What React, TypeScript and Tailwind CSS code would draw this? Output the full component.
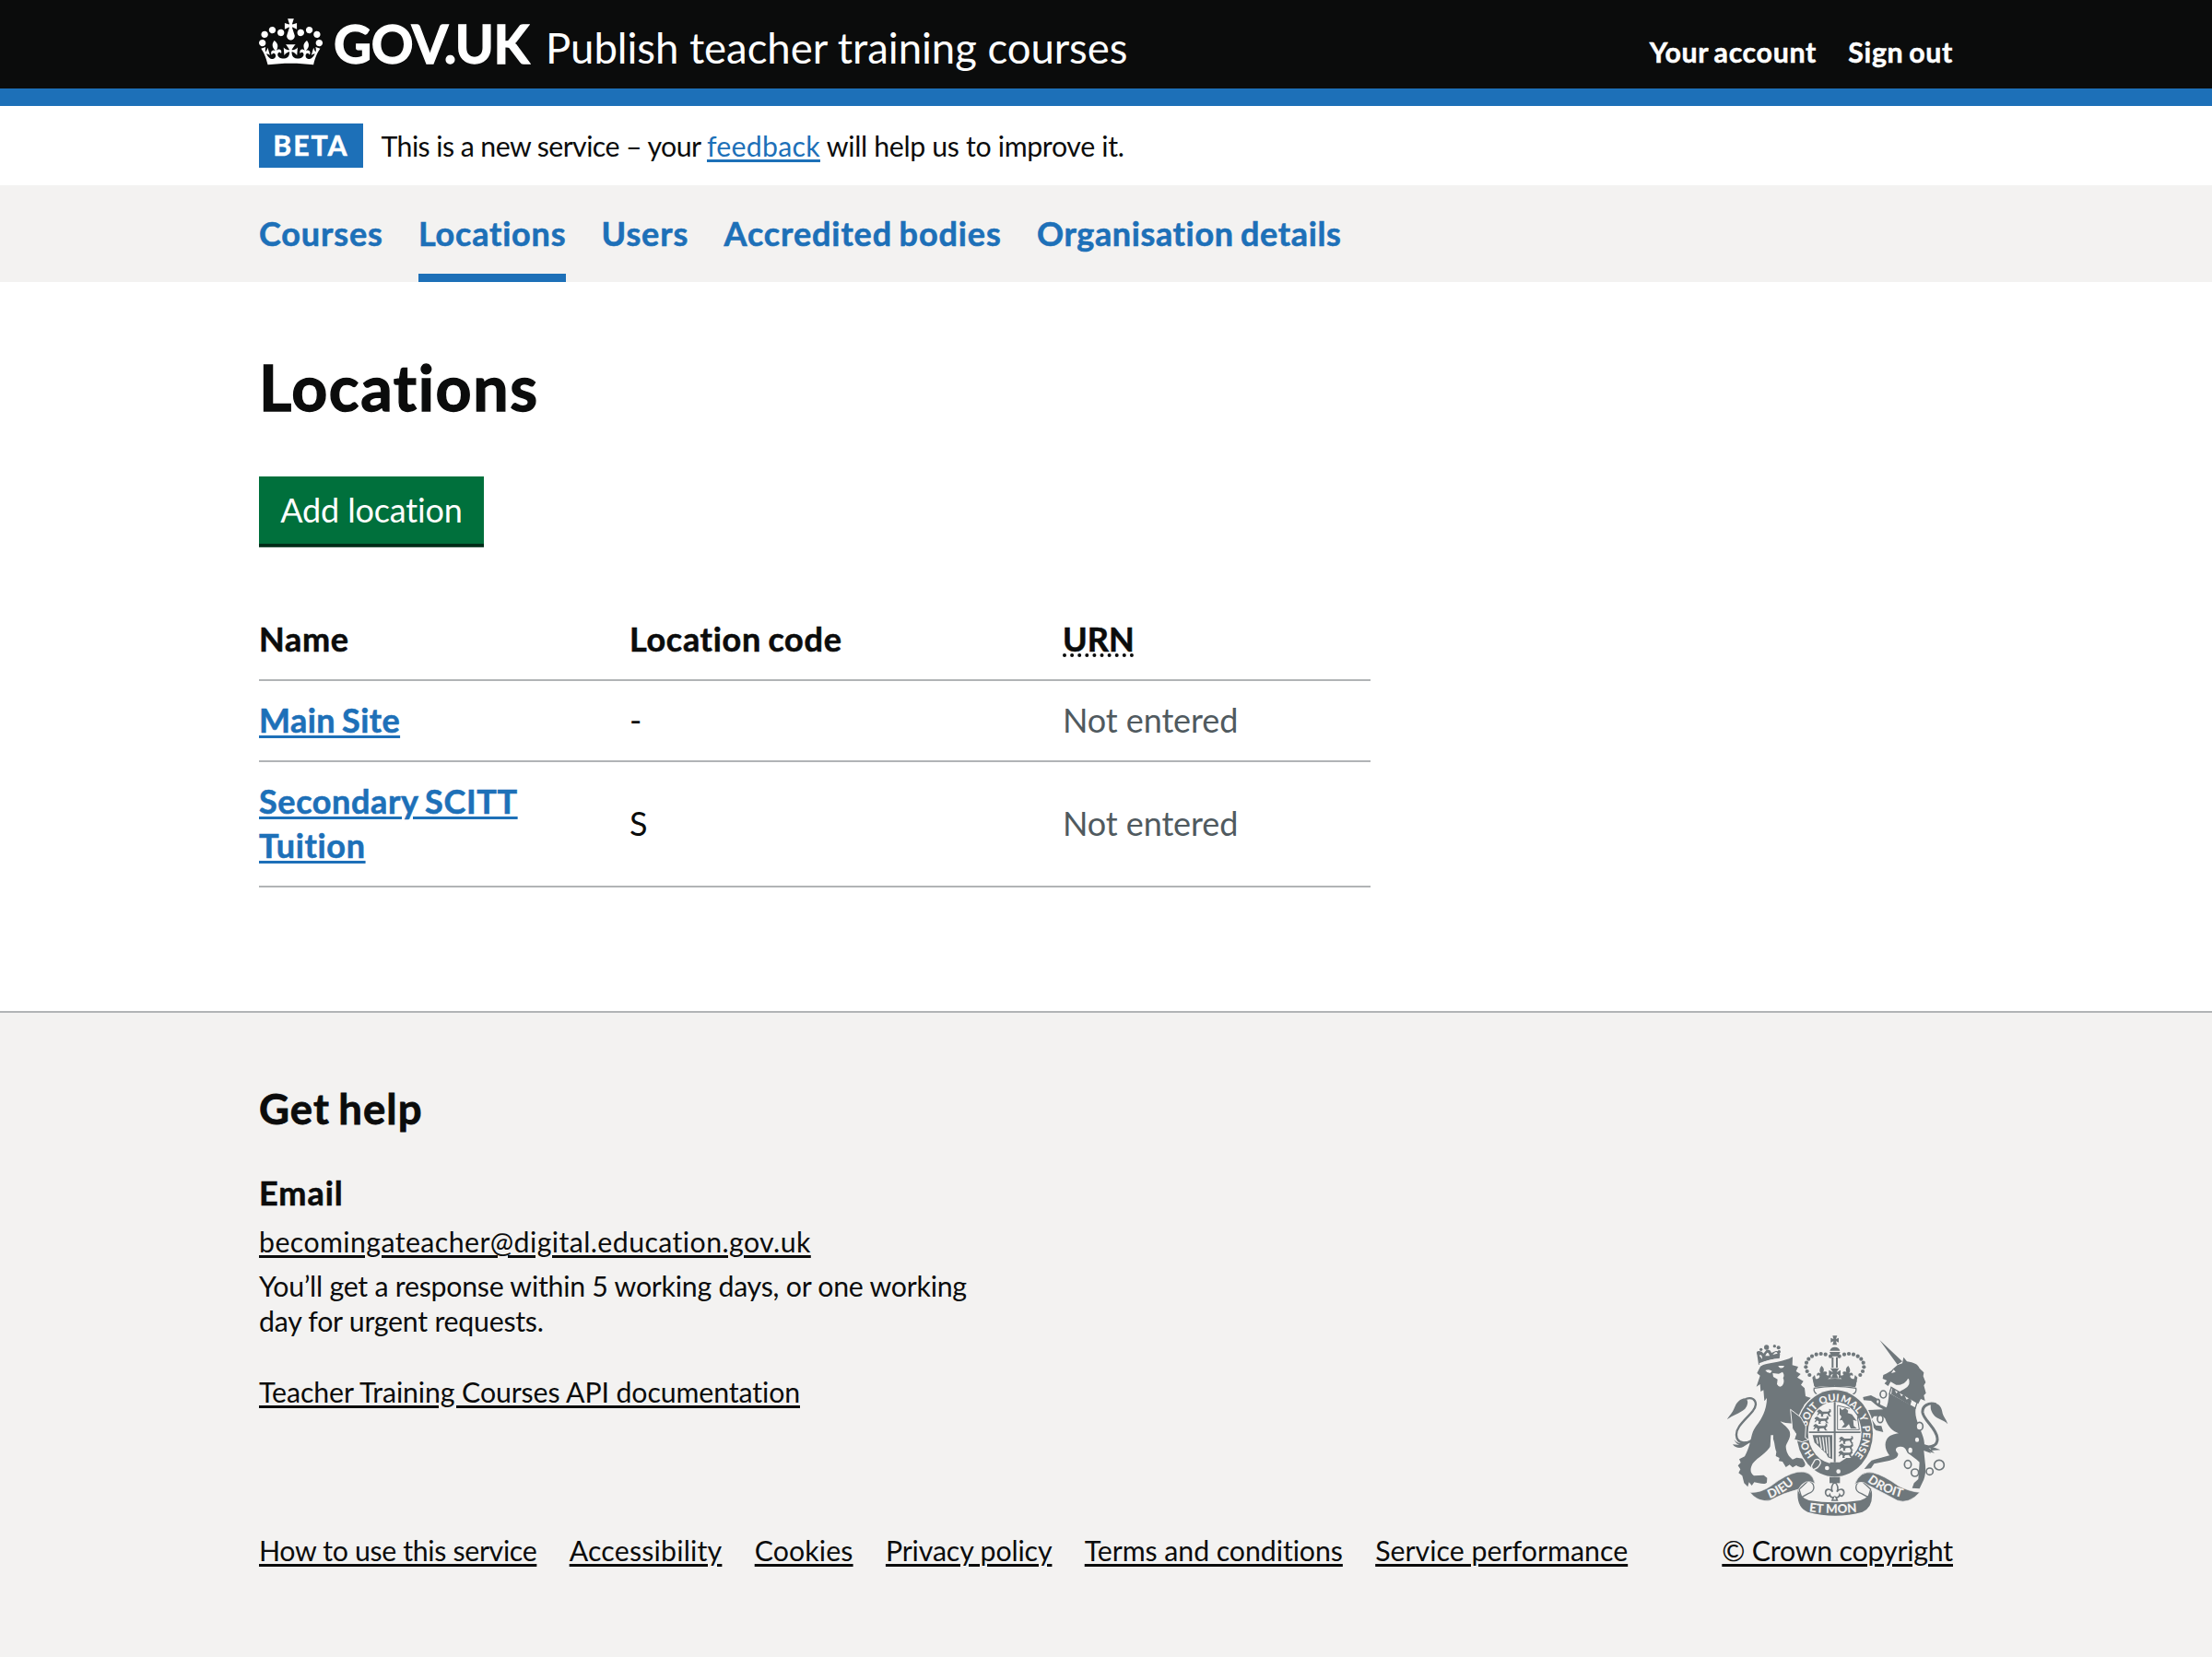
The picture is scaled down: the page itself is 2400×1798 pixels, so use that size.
import type { ReactNode } from "react";

function Crown() {
  return (
    <svg viewBox="0 0 132 97" className="mt-5 h-[51px] w-[69px] shrink-0 fill-white" aria-hidden="true">
      <path d="M25 30.2c3.5 1.5 7.7-.2 9.1-3.7 1.5-3.6-.2-7.8-3.9-9.2-3.6-1.4-7.6.3-9.1 3.9-1.4 3.5.3 7.5 3.9 9zM9 39.5c3.6 1.5 7.8-.2 9.2-3.7 1.5-3.6-.2-7.8-3.9-9.1-3.6-1.5-7.6.2-9.1 3.8-1.4 3.5.3 7.5 3.8 9zM4.4 57.2c3.5 1.5 7.7-.2 9.1-3.8 1.5-3.6-.2-7.7-3.9-9.1-3.5-1.5-7.6.3-9.1 3.8-1.4 3.5.3 7.6 3.9 9.1zm38.3-21.4c3.5 1.5 7.7-.2 9.1-3.8 1.5-3.6-.2-7.7-3.9-9.1-3.6-1.5-7.6.3-9.1 3.8-1.3 3.6.4 7.7 3.9 9.1zm64.4-5.6c-3.6 1.5-7.8-.2-9.1-3.7-1.5-3.6.2-7.8 3.8-9.2 3.6-1.4 7.7.3 9.2 3.9 1.3 3.5-.4 7.5-3.9 9zm15.9 9.3c-3.6 1.5-7.7-.2-9.1-3.7-1.5-3.6.2-7.8 3.7-9.1 3.6-1.5 7.7.2 9.2 3.8 1.5 3.5-.3 7.5-3.8 9zm4.7 17.7c-3.6 1.5-7.8-.2-9.2-3.8-1.5-3.6.2-7.7 3.9-9.1 3.6-1.5 7.7.3 9.2 3.8 1.3 3.5-.4 7.6-3.9 9.1zM89.3 35.8c-3.6 1.5-7.8-.2-9.2-3.8-1.4-3.6.2-7.7 3.9-9.1 3.6-1.5 7.7.3 9.2 3.8 1.4 3.6-.3 7.7-3.9 9.1zM69.7 17.7l8.9 4.7V9.3l-8.9 2.8c-.2-.3-.5-.6-.9-.9L72.4 0H59.6l3.5 11.2c-.3.3-.6.5-.9.9l-8.8-2.8v13.1l8.8-4.7c.3.3.6.7.9.9l-5 15.4v.1c-.2.8-.4 1.6-.4 2.4 0 4.1 3.1 7.5 7 8.1h.2c.3 0 .7.1 1 .1.4 0 .7 0 1-.1h.2c4-.6 7.1-4.1 7.1-8.1 0-.8-.1-1.7-.4-2.4V34l-5.1-15.4c.4-.2.7-.6 1-.9zM66 92.8c16.9 0 32.8 1.1 47.1 3.2 4-16.9 8.9-26.7 14-33.5l-9.6-3.4c1 4.9 1.1 7.2 0 10.2-1.5-1.4-3-4.3-4.2-8.7L108.6 76c2.8-2 5-3.2 7.5-3.3-4.4 9.4-10 11.9-13.6 11.2-4.3-.8-6.3-4.6-5.6-7.9 1-4.7 5.7-5.9 8-.5 4.3-8.7-3-11.4-7.6-8.8 7.1-7.2 7.9-13.5 2.1-21.1-8 6.1-8.1 12.3-4.5 20.8-4.7-5.4-12.1-2.5-9.5 6.2 3.4-5.2 7.9-2 7.2 3.1-.6 4.3-6.4 7.8-13.5 7.2-10.3-.9-10.9-8-11.2-13.8 2.5-.5 7.1 1.8 11 7.3L80.2 60c-4.1 4.4-8 5.3-12.3 5.4 1.4-4.4 8-11.6 8-11.6H55.5s6.4 7.2 7.9 11.6c-4.2-.1-8-1-12.3-5.4l1.4 16.4c3.9-5.5 8.5-7.7 10.9-7.3-.3 5.8-.9 12.8-11.1 13.8-7.2.6-12.9-2.9-13.5-7.2-.7-5 3.8-8.3 7.1-3.1 2.7-8.7-4.6-11.6-9.4-6.2 3.7-8.5 3.6-14.7-4.6-20.8-5.8 7.6-5 13.9 2.2 21.1-4.7-2.6-11.9.1-7.7 8.8 2.3-5.5 7.1-4.2 8.1.5.7 3.3-1.3 7.1-5.7 7.9-3.5.7-9-1.8-13.5-11.2 2.5.1 4.7 1.3 7.5 3.3l-4.7-15.4c-1.2 4.4-2.7 7.2-4.3 8.7-1.1-3-.9-5.3 0-10.2l-9.5 3.4c5 6.9 9.9 16.7 14 33.5 14.8-2.1 30.8-3.2 47.7-3.2z" />
    </svg>
  );
}

const INK = "#6f777b";
const PAPER = "#f3f2f1";

/* One half of the central crown: beads, arch and fleur-de-lis. */
function HalfCrown() {
  const beads = [
    [378, 95], [362, 89], [347, 87], [332, 89], [318, 95], [307, 104], [300, 116], [298, 130], [302, 144], [310, 156],
  ];
  return (
    <g>
      {beads.map(([x, y]) => (
        <circle key={x + "-" + y} cx={x} cy={y} r="6.3" />
      ))}
      <path d="M349 126c-7 9-8 16-3 25-8-6-14 0-12 8 5-4 9-3 9 2-1 5-6 8-13 8l-3-13-8 8 6 28h67v-10c-12 0-20-4-22-13 6-6 10-2 11 2l-2-18c-8 8-14 4-15 0 6-2 3-12-9-7 4-8 1-14-6-20z" />
    </g>
  );
}

/* One small lion of the shield, walking left. */
function ShieldLion({ x, y }: { x: number; y: number }) {
  return (
    <path
      transform={`translate(${x} ${y})`}
      d="M2 4l6-4 5 3 5 4h18l5-4-2-5 6 2 1 8-5 4 1 6 5 4h-8l-5-8-12 1-3 6 3 3h-9l1-8-5-3-6 6H0l5-9-5-2z"
    />
  );
}

function RoyalArms() {
  return (
    <svg viewBox="42 24 726 594" className="h-[198px] w-[242px]" role="img" aria-label="Royal coat of arms">
      <defs>
        <path id="garter" pathLength={360} d="M392 447A92 103 0 0 1 300 344A92 103 0 0 1 392 241A92 103 0 0 1 484 344A92 103 0 0 1 392 447" />
        <path id="dieu" d="M180 558Q232 541 276 493" />
        <path id="mon" d="M308 601Q390 611 482 600" />
        <path id="droit" d="M498 502Q545 540 618 557" />
      </defs>

      {/* central crown */}
      <g fill={INK}>
        <path d="M385 28h15l-4 11 9-4v15l-9-4 3 12h-14l3-12-9 4V35l9 4zM376 77a17 15 0 0 1 33 0zM375 81h35l-7 14h-21zM382 98h6v34h-6zM396 98h6v34h-6zM378 134h28l-8 13 13-7v20l-13-8 6 15h-24l6-15-13 8v-20l13 7z" />
        <HalfCrown />
        <g transform="translate(785 0) scale(-1 1)">
          <HalfCrown />
        </g>
        <path d="M322 174q70-12 142 0l-5 22q-66-11-132 0z" />
      </g>
      <path d="M325 199q67-12 136 0q3 12-8 19H333q-11-8-8-19z" fill={PAPER} stroke={INK} strokeWidth="4" />

      {/* lion */}
      <g fill={INK}>
        <path d="M150 128l-11 22 10 8-12 36 12-8 2 24 9-5 3 36 8-10c0 18-4 40-16 62-10 20-26 34-32 56-7 26-8 42-24 72l-18 9 5 11-9 10 8 12-6 12 12 9 6 24 12 12 4-15 9 11 8-11c13 3 36 9 41 1l1-15-11-9-32 2c-12-8-14-22-4-40 18-22 45-32 60-60l5-24c8 18 6 32 12 46l-2 14 12 6-2 10 12 2 11 18 12-8 10 9 12-7c13 10 29 8 29-4l-6-18-22-3-13 6c-14-10-22-26-22-44 6-17 18-28 12-48-9-16-22-22-30-32 15 6 32 8 45 6l8 12 9 15-6 13 18-6 2 14 16-2c9-12 7-34-8-54l-16-24 10-28 22-22-18-6-3-26-12-11 8-12-20-12 11-11-15-9 7-15-19-5 1-27c-30 17-68 18-96 26z" />
        <path d="M101 232c-22 2-30 18-37 34-6 14-14 20-24 36 16-14 42-20 60-36 8-10 14-26 1-34z" />
        <path d="M64 366c8 14 14 18 22 18l-26-2c8 12 24 14 34 8l22-14-12-4-22 6c-8-2-13-6-18-12z" />
        <path d="M143 114l-5-32q14-8 22 4l10-12q12-2 16 10l14-6q12-2 14 10l-2 15q-37 0-68 20z" />
        <circle cx="144" cy="84" r="6" />
        <circle cx="152" cy="73" r="5" />
        <circle cx="170" cy="66" r="8" />
        <circle cx="196" cy="62" r="5" />
        <circle cx="209" cy="67" r="6" />
        <circle cx="211" cy="80" r="5" />
      </g>
      <path d="M102 234c30-10 42 14 24 38-22 28-56 52-54 80 1 26 34 34 58 10" fill="none" stroke={INK} strokeWidth="7" />
      <g fill={PAPER}>
        <path d="M146 92q10-6 10 12zM166 94q8-22 14 0zM190 90q12-16 16-4z" />
        <path d="M146 118q32-14 69-16l1 4q-40 3-68 16zM166 141q12-6 22 2l-6 7q-10 0-16-9zM208 126h20q-4 11-16 6zM190 150l20 2 12-6q8 10 2 20 6 12-2 24-10 10-18-4l2-16-14-8z" />
        <path d="M184 352l8 0-1 40-9-3z" />
      </g>

      {/* unicorn */}
      <g transform="translate(360 0)">
        <path fill={INK} d="M178 42L236 122 252 112zM236 124L252 118 256 98 267 112C290 116 302 120 308 134L322 148 320 160 328 180 322 190 329 215 322 222 326 240 312 234 304 250 240 212C252 204 268 200 274 186 276 176 274 166 270 168 262 184 246 190 232 188L214 178 206 192 194 184 202 174 188 168 190 156C204 150 216 144 222 136z" />
        <path fill={INK} d="M212 205L296 262C292 285 298 300 306 322 314 345 324 360 324 385L346 411 322 402 326 440C330 470 326 490 318 505L308 526 284 524 290 508 304 495 308 440C296 428 280 420 270 408 262 400 262 385 240 390 228 394 228 402 238 412 240 425 225 432 205 436L160 445 150 460 128 462 142 445 152 434 210 418C200 405 192 385 200 368 208 352 225 348 240 346 222 340 205 325 196 298L188 290 160 290 152 300 166 320 184 322 190 342 166 336 150 318 134 282 140 270 190 268 172 258 150 240 126 238 124 228 150 222 168 232 180 252 200 262C208 245 206 225 212 205z" />
        <path fill="none" stroke={INK} strokeWidth="9" d="M362 252c-24-8-46 4-44 26 4 26 46 52 48 84 2 22-20 34-44 24" />
        <path fill={INK} d="M346 250c26-8 34 14 36 26 2 14 12 22 18 40-14-16-34-14-46-30-10-14-12-26-8-36zM325 382l32 28-24-6zM340 386l36 14-30 2z" />
        <path fill={PAPER} d="M216 150l14-4-6-8z" />
        <path fill={PAPER} stroke={INK} strokeWidth="4" d="M216 196l84 50-6 18-84-46z" />
        <path fill={INK} d="M219 200l8 2 5 14 8-8 9 18 8-8 9 18 9-6 7 10-4 14-62-36z" />
        <g fill={PAPER} stroke={INK} strokeWidth="5">
          <ellipse cx="190" cy="219" rx="10" ry="12" />
          <ellipse cx="172" cy="243" rx="6" ry="8" />
          <ellipse cx="180" cy="299" rx="9" ry="12" />
          <ellipse cx="308" cy="323" rx="11" ry="13" />
          <ellipse cx="300" cy="367" rx="9" ry="10" />
          <ellipse cx="278" cy="401" rx="9" ry="11" />
          <ellipse cx="270" cy="447" rx="11" ry="13" />
          <ellipse cx="293" cy="474" rx="12" ry="12" />
          <ellipse cx="341" cy="470" rx="11" ry="11" />
          <circle cx="372" cy="449" r="16" />
        </g>
      </g>

      {/* garter and shield */}
      <ellipse cx="392" cy="346" rx="128" ry="145" fill={PAPER} />
      <ellipse cx="392" cy="346" rx="124" ry="141" fill={INK} />
      <ellipse cx="392" cy="344" rx="87" ry="101" fill={PAPER} />
      <g fill={INK}>
        <path d="M389 244h6v196h-6zM308 340h168v5H308z" />
        <ShieldLion x={334} y={268} />
        <ShieldLion x={326} y={291} />
        <ShieldLion x={322} y={315} />
        <ShieldLion x={406} y={356} />
        <ShieldLion x={406} y={379} />
        <ShieldLion x={404} y={402} />
        <path d="M408 262l8 8 10-6 10 8-2 8 14 4 16 22-12-4 2 20 10 8H444l-6-14-10 10-14 2 10-12-8-14-8 2 6-12-6-8z" />
        <path d="M384 352v78l-14-6-6-12-38-36-6-24zM376 440h32l22-14h22q-22 26-60 26-12 0-16-12z" />
      </g>
      <path d="M333 360l4 20M343 358l6 38M353 358l6 46M363 358l5 54M373 358l3 64" stroke={PAPER} strokeWidth="4" fill="none" />
      <path d="M401 255l40 10M466 292l6 42h-71v-79" stroke={INK} strokeWidth="3" fill="none" />
      <g fill={PAPER} className="font-['Lato'] text-[33px] font-black" textAnchor="middle">
        <text><textPath href="#garter" startOffset="59">HO</textPath></text>
        <text><textPath href="#garter" startOffset="124">SOIT</textPath></text>
        <text><textPath href="#garter" startOffset="170">QUI</textPath></text>
        <text><textPath href="#garter" startOffset="211">MAL</textPath></text>
        <text><textPath href="#garter" startOffset="243">Y</textPath></text>
        <text><textPath href="#garter" startOffset="287">PENSE</textPath></text>
      </g>
      {/* paw over the garter, and buckle */}
      <path d="M248 268l34 26 16 30-2 36 12 6-22 8-26-8 6-18-12-18z" fill={INK} stroke={PAPER} strokeWidth="3" />
      <path d="M328 432q16-6 18 10-6 18-24 22-10-10-2-18z" fill={INK} stroke={PAPER} strokeWidth="4" />
      <circle cx="367" cy="459" r="7" fill={PAPER} />
      <circle cx="404" cy="470" r="7" fill={PAPER} />

      {/* pendant fleur */}
      <path d="M375 488h34v20h-34z" fill={INK} />
      <path d="M392 504c-10 10-14 20-7 32-10-12-24-10-23 4 1 10 10 13 14 6 2 8 8 10 12 8l-4 10h16l-4-10c4 2 10 0 12-8 4 7 13 4 14-6 1-14-13-16-23-4 7-12 3-22-7-32z" fill={PAPER} stroke={INK} strokeWidth="5" />

      {/* motto scroll */}
      <path d="M306 500c24 10 24 34 0 42l-22 12-8-26z" fill={PAPER} stroke={INK} strokeWidth="4" />
      <path d="M479 500c-24 10-24 34 0 42l22 12 8-26z" fill={PAPER} stroke={INK} strokeWidth="4" />
      <path d="M116 538q36 2 70-22 46-36 84-44 48-8 58 38-14-10-30-6-16 8-24 24-50 12-92 36-40 8-66-26z" fill={INK} stroke={PAPER} strokeWidth="2" />
      <path d="M669 538q-30-2-68-20-50-36-84-44-42-8-60 38 14-10 30-6 14 10 24 14 40 20 84 44 38 14 74-26z" transform="translate(0 0)" fill={INK} stroke={PAPER} strokeWidth="2" />
      <path d="M272 530q8 24 36 34 84 14 168 0 26-8 36-34 8 56-30 72-88 24-178 0-38-16-32-72z" fill={INK} />
      <g fill={PAPER} className="font-['Lato'] text-[40px] font-black">
        <text><textPath href="#dieu">DIEU</textPath></text>
        <text><textPath href="#mon">ET MON</textPath></text>
        <text><textPath href="#droit">DROIT</textPath></text>
      </g>
    </svg>
  );
}

function Link({ className = "", children }: { className?: string; children: ReactNode }) {
  return (
    <a href="#" className={`underline decoration-[2.6px] underline-offset-[3px] ${className}`}>
      {children}
    </a>
  );
}

const navItems = [
  { label: "Courses", className: "tracking-[0.87px]" },
  { label: "Locations", className: "tracking-[0.78px] border-b-[9px] border-[#1d70b8]" },
  { label: "Users", className: "tracking-[0.9px]" },
  { label: "Accredited bodies", className: "tracking-[0.89px]" },
  { label: "Organisation details", className: "tracking-[0.63px]" },
];

const locations = [
  { name: "Main Site", code: "-", className: "tracking-[0.42px]" },
  { name: "Secondary SCITT Tuition", code: "S", className: "tracking-[0.62px]" },
];

const footerLinks = [
  { label: "How to use this service", className: "tracking-[-0.34px]" },
  { label: "Accessibility", className: "tracking-[0.2px]" },
  { label: "Cookies", className: "tracking-[0.12px]" },
  { label: "Privacy policy", className: "tracking-[-0.13px]" },
  { label: "Terms and conditions", className: "tracking-[-0.07px]" },
  { label: "Service performance", className: "tracking-[0.02px]" },
];

export default function App() {
  return (
    <div className="flex min-h-screen w-full flex-col bg-white font-['Lato',sans-serif] text-[36px] text-[#0b0c0c]">
      <header className="h-[115px] border-b-[19px] border-[#1d70b8] bg-[#0b0c0c] text-white">
        <div className="mx-auto flex w-[1838px]">
          <Crown />
          <span className="mt-[17px] ml-[12px] w-[212px] text-[56.8px] leading-[60px] font-bold tracking-[-0.5px] [-webkit-text-stroke:1.3px_white]">
            GOV.UK
          </span>
          <span className="mt-[22px] ml-[18px] text-[45.5px] leading-[60px] tracking-[-0.05px]">Publish teacher training courses</span>
          <nav className="mt-[36.3px] ml-auto flex gap-[34.5px] text-[30.3px] leading-[40px] font-bold tracking-[0.65px] [word-spacing:-2px] [-webkit-text-stroke:0.5px]">
            <a href="#">Your account</a>
            <a href="#">Sign out</a>
          </nav>
        </div>
      </header>

      <div className="mx-auto flex h-[86px] w-[1838px] items-center text-[30.3px]">
        <strong className="flex h-12 w-[113px] items-center bg-[#1d70b8] px-[15.3px] font-bold tracking-[1.9px] text-white [-webkit-text-stroke:0.5px]">
          BETA
        </strong>
        <p className="ml-[19.5px] pb-px leading-[40px] whitespace-pre">
          <span className="tracking-[-0.58px]">This is a new service – your </span>
          <Link className="tracking-[0.25px] text-[#1d70b8]">feedback</Link>
          <span className="tracking-[-0.34px]"> will help us to improve it.</span>
        </p>
      </div>

      <div className="bg-[#f3f2f1]">
        <nav className="mx-auto flex h-[105px] w-[1838px] gap-[38.3px] leading-[104px] font-bold text-[#1d70b8] [word-spacing:-2px] [-webkit-text-stroke:0.6px]">
          {navItems.map((item) => (
            <a key={item.label} href="#" className={item.className}>
              {item.label}
            </a>
          ))}
        </nav>
      </div>

      <main className="mx-auto w-[1838px] pt-[73.7px] pb-[134px]">
        <h1 className="text-[68px] leading-[80px] font-bold tracking-[1.6px] [-webkit-text-stroke:1.3px]">Locations</h1>
        <button className="mt-[57.3px] flex h-[73px] w-[244px] items-center justify-center bg-[#00703c] tracking-[-0.15px] text-white shadow-[0_3.8px_0_#002d18]">
          Add location
        </button>

        <div className="mt-[61px] w-[1206px] leading-[47.9px]">
          <div className="grid h-[88px] grid-cols-[402px_470px_1fr] items-center border-b-2 border-[#b1b4b6] font-bold tracking-[0.7px] [word-spacing:-2px] [-webkit-text-stroke:0.6px]">
            <span>Name</span>
            <span>Location code</span>
            <span>
              <abbr className="tracking-[0.1px] underline decoration-dotted decoration-[3.7px] underline-offset-[2px] [text-decoration-skip-ink:none]">
                URN
              </abbr>
            </span>
          </div>
          {locations.map((row) => (
            <div
              key={row.name}
              className="grid h-[88px] grid-cols-[402px_470px_1fr] items-center border-b-2 border-[#b1b4b6] last:h-[136px]"
            >
              <span className="pr-10 font-bold [word-spacing:-2px] [-webkit-text-stroke:0.6px]">
                <Link className={`text-[#1d70b8] [-webkit-text-stroke-color:#1d70b8] ${row.className}`}>{row.name}</Link>
              </span>
              <span>{row.code}</span>
              <span className="tracking-[-0.1px] text-[#505a5f]">Not entered</span>
            </div>
          ))}
        </div>
      </main>

      <footer className="grow border-t-2 border-[#b1b4b6] bg-[#f3f2f1] text-[30.3px] leading-[38.3px]">
        <div className="mx-auto flex w-[1838px] items-end justify-between pt-[73.7px]">
          <div>
            <h2 className="text-[45.5px] leading-[60px] font-bold tracking-[1.1px] [word-spacing:-3px] [-webkit-text-stroke:0.8px]">Get help</h2>
            <h3 className="mt-[37px] text-[36px] leading-[48px] font-bold tracking-[1px] [-webkit-text-stroke:0.6px]">Email</h3>
            <p className="mt-[10.4px]">
              <Link className="tracking-[0.41px]">becomingateacher@digital.education.gov.uk</Link>
            </p>
            <p className="mt-[9.7px] w-[800px] tracking-[-0.25px]">
              You’ll get a response within 5 working days, or one working day for urgent requests.
            </p>
            <p className="mt-[38px]">
              <Link className="tracking-[-0.12px]">Teacher Training Courses API documentation</Link>
            </p>
            <ul className="mt-[134.3px] flex gap-[35.3px]">
              {footerLinks.map((item) => (
                <li key={item.label}>
                  <Link className={item.className}>{item.label}</Link>
                </li>
              ))}
            </ul>
          </div>
          <div className="flex flex-col items-end gap-[17.5px]">
            <div className="pr-[3px]">
              <RoyalArms />
            </div>
            <Link className="tracking-[-0.2px]">© Crown copyright</Link>
          </div>
        </div>
      </footer>
    </div>
  );
}
